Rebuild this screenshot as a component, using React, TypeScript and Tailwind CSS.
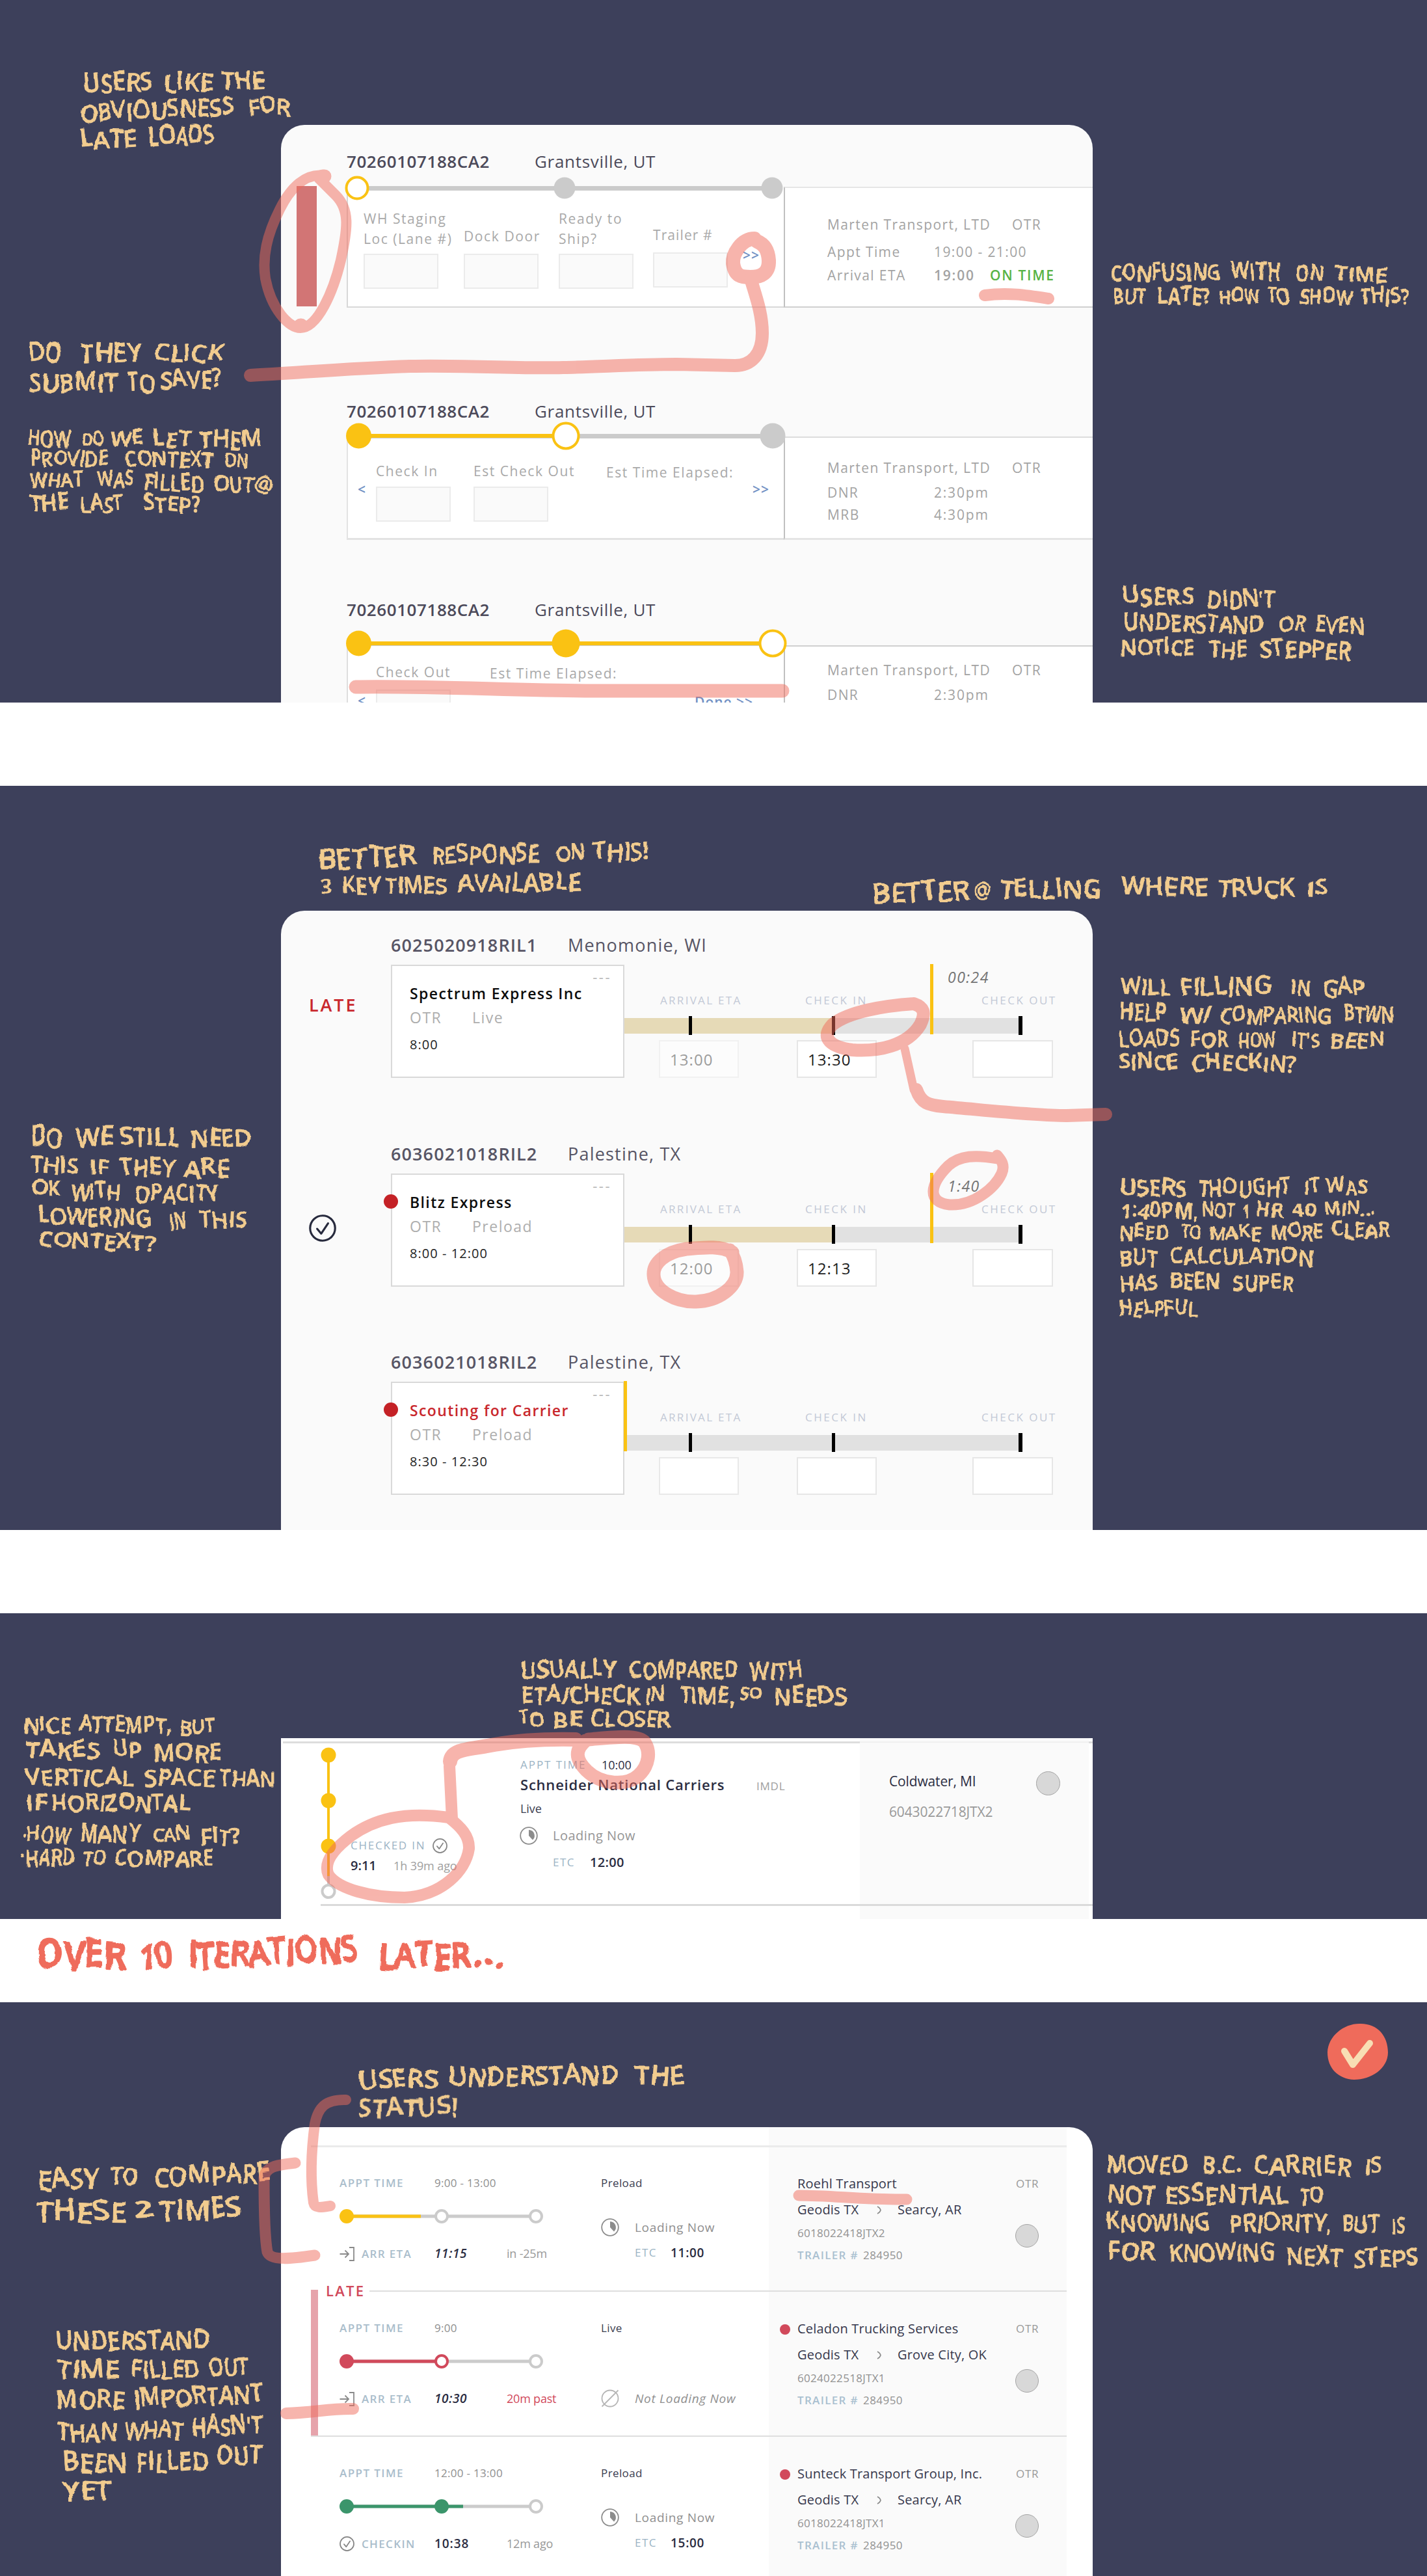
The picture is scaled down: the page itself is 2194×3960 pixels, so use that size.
import type { ReactNode } from "react";

/* ---------- shared pieces ---------- */

type Tone = "done" | "open" | "todo";

const YELLOW = "#fac213";

function WideStepper({ dots, fillTo }: { dots: { x: number; r: number; tone: Tone }[]; fillTo: number }) {
  return (
    <svg className="absolute -top-[24px] -left-[6px] overflow-visible" width="690" height="48" viewBox="-4 -24 690 48">
      <rect x="0" y="-3" width="660" height="7" fill="#cbcbcb" />
      {fillTo > 0 && <rect x="0" y="-3" width={fillTo} height="6" fill={YELLOW} />}
      {dots.map((d, i) =>
        d.tone === "open" ? (
          <circle key={i} cx={d.x} cy="0" r={d.r - 2} fill="#fff" stroke={YELLOW} strokeWidth="4" />
        ) : (
          <circle key={i} cx={d.x} cy="0" r={d.r} fill={d.tone === "done" ? YELLOW : "#cbcbcb"} />
        )
      )}
    </svg>
  );
}

function LoadHeader({ className }: { className: string }) {
  return (
    <div className={`flex pl-[101px] text-[26px] leading-[36px] text-[#4c4a5a] ${className}`}>
      <div className="w-[289px] font-semibold tracking-[0.57px]">70260107188CA2</div>
      <div className="tracking-[0.7px]">Grantsville, UT</div>
    </div>
  );
}

const FIELD = "h-[54px] w-[115px] shrink-0 border-2 border-[#ebebeb] bg-[#fafafa]";

function Arrow({ className, children }: { className: string; children: ReactNode }) {
  return (
    <div className={`absolute text-[21px] leading-[31px] font-semibold tracking-[1px] text-[#7191c4] ${className}`}>
      {children}
    </div>
  );
}

function CheckCircle({ size, stroke, width }: { size: number; stroke: string; width: number }) {
  return (
    <svg width={size} height={size} viewBox="0 0 40 40" fill="none" stroke={stroke} strokeWidth={width}>
      <circle cx="20" cy="20" r="18.3" />
      <path d="M12 21l6 7 10-15" strokeLinecap="round" strokeLinejoin="round" />
    </svg>
  );
}

function Pie() {
  return (
    <svg className="shrink-0" width="28" height="28" viewBox="0 0 28 28">
      <circle cx="14" cy="14" r="12.8" fill="none" stroke="#8c8c8c" strokeWidth="1.8" />
      <path d="M14 5a9 9 0 0 1 6 15.600L14 14z" fill="#8c8c8c" />
    </svg>
  );
}

/* ---------- first iteration ---------- */

function Step1() {
  return (
    <section className="h-[1080px] overflow-hidden bg-[#3d405b] pt-[192px] pl-[432px]">
      <div className="h-[888px] w-[1248px] overflow-hidden rounded-t-[36px] bg-[#fafafa] pt-[38px]">
        <LoadHeader className="" />
        <div className="mt-[20px] flex h-[187px]">
          <div className="w-[101px] pl-[24px]">
            <div className="h-[185px] w-[31px] bg-[#d27575]" />
          </div>
          <div className="relative mt-px flex w-[672px] border-b-2 border-l-2 border-[#d8d8d8] bg-white pt-[34px] pl-[24px] text-[21px] leading-[31px] tracking-[1.6px] text-[#a9a9a9]">
            <div className="w-[154px]">
              <div className="h-[62px] tracking-[1.55px]">
                WH Staging
                <br />
                Loc (Lane #)
              </div>
              <div className={`mt-[7px] ${FIELD}`} />
            </div>
            <div className="w-[146px]">
              <div className="flex h-[62px] items-end pb-[4px]">Dock Door</div>
              <div className={`mt-[7px] ${FIELD}`} />
            </div>
            <div className="w-[145px]">
              <div className="h-[62px]">
                Ready to
                <br />
                Ship?
              </div>
              <div className={`mt-[7px] ${FIELD}`} />
            </div>
            <div className="w-[120px]">
              <div className="flex h-[62px] items-end pb-[6px] tracking-[1.1px]">Trailer #</div>
              <div className={`mt-[5px] ${FIELD}`} />
            </div>
            <Arrow className="top-[90px] left-[607px]">&gt;&gt;</Arrow>
            <div className="absolute top-[2px] left-0">
              <WideStepper
                fillTo={0}
                dots={[
                  { x: 16, r: 18.5, tone: "open" },
                  { x: 335, r: 16.5, tone: "todo" },
                  { x: 654, r: 16.5, tone: "todo" },
                ]}
              />
            </div>
          </div>
          <div className="mt-px w-[475px] border-y-2 border-l-2 border-t-[#e6e6e6] border-b-[#d0d0d0] border-l-[#c0c0c0] bg-white pt-[38px] pl-[65px] text-[21px] leading-[36px] tracking-[1.4px] text-[#a3a3a3]">
            <div className="flex">
              <div className="w-[284px]">Marten Transport, LTD</div>
              <div>OTR</div>
            </div>
            <div className="mt-[6px] flex">
              <div className="w-[164px]">Appt Time</div>
              <div>19:00 - 21:00</div>
            </div>
            <div className="flex">
              <div className="w-[164px]">Arrival ETA</div>
              <div className="w-[86px] font-semibold tracking-[1.8px]">19:00</div>
              <div className="font-semibold tracking-[1.7px] text-[#57b345]">ON TIME</div>
            </div>
          </div>
        </div>

        <LoadHeader className="mt-[141px]" />
        <div className="mt-[21px] flex h-[159px] pl-[101px]">
          <div className="relative flex w-[672px] border-b-3 border-l-2 border-[#e3e3e3] bg-white pt-[38px] pl-[43px] text-[21px] leading-[31px] tracking-[1.55px] text-[#a9a9a9]">
            <Arrow className="top-[66px] left-[15px]">&lt;</Arrow>
            <div className="w-[150px]">
              <div className="whitespace-nowrap">Check In</div>
              <div className={`mt-[8px] ${FIELD}`} />
            </div>
            <div className="w-[204px]">
              <div className="whitespace-nowrap">Est Check Out</div>
              <div className={`mt-[8px] ${FIELD}`} />
            </div>
            <div className="pt-[2px] whitespace-nowrap">Est Time Elapsed:</div>
            <Arrow className="top-[66px] left-[622px]">&gt;&gt;</Arrow>
            <div className="absolute -top-px left-0">
              <WideStepper
                fillTo={320}
                dots={[
                  { x: 18.5, r: 19.5, tone: "done" },
                  { x: 337, r: 21.5, tone: "open" },
                  { x: 655, r: 19.5, tone: "todo" },
                ]}
              />
            </div>
          </div>
          <div className="w-[475px] border-t-2 border-b-3 border-l-2 border-t-[#dcdcdc] border-b-[#e5e5e5] border-l-[#c0c0c0] bg-white pt-[29px] pl-[65px] text-[21px] leading-[34px] tracking-[1.4px] text-[#a3a3a3]">
            <div className="flex">
              <div className="w-[284px]">Marten Transport, LTD</div>
              <div>OTR</div>
            </div>
            <div className="mt-[4px] flex">
              <div className="w-[164px]">DNR</div>
              <div className="tracking-[1.8px]">2:30pm</div>
            </div>
            <div className="flex">
              <div className="w-[164px]">MRB</div>
              <div className="tracking-[1.8px]">4:30pm</div>
            </div>
          </div>
        </div>

        <LoadHeader className="mt-[89px]" />
        <div className="mt-[37px] flex h-[159px] pl-[101px]">
          <div className="relative flex w-[672px] border-b-2 border-l-2 border-[#dedede] bg-white pt-[26px] pl-[43px] text-[21px] leading-[31px] tracking-[1.55px] text-[#a9a9a9]">
            <Arrow className="top-[70px] left-[15px]">&lt;</Arrow>
            <div className="w-[175px]">
              <div className="whitespace-nowrap">Check Out</div>
              <div className={`mt-[11px] ${FIELD}`} />
            </div>
            <div className="pt-[2px] whitespace-nowrap">Est Time Elapsed:</div>
            <Arrow className="top-[72px] left-[533px]">Done &gt;&gt;</Arrow>
            <div className="absolute -top-[3px] left-0">
              <WideStepper
                fillTo={660}
                dots={[
                  { x: 18.5, r: 19.5, tone: "done" },
                  { x: 337, r: 21.5, tone: "done" },
                  { x: 655, r: 21.5, tone: "open" },
                ]}
              />
            </div>
          </div>
          <div className="w-[475px] border-t-2 border-l-2 border-t-[#d0d0d0] border-l-[#c0c0c0] bg-white pt-[19px] pl-[65px] text-[21px] leading-[34px] tracking-[1.4px] text-[#a3a3a3]">
            <div className="flex">
              <div className="w-[284px]">Marten Transport, LTD</div>
              <div>OTR</div>
            </div>
            <div className="mt-[4px] flex">
              <div className="w-[164px]">DNR</div>
              <div className="tracking-[1.8px]">2:30pm</div>
            </div>
          </div>
        </div>
      </div>
    </section>
  );
}

/* ---------- second iteration ---------- */

type Load = {
  id: string;
  place: string;
  carrier: string;
  kind: string;
  slot: string;
  status?: "late" | "check";
  dot?: boolean;
  scouting?: boolean;
  elapsed?: string;
  arrival?: string;
  checkIn?: string;
};

const LOADS: Load[] = [
  { id: "6025020918RIL1", place: "Menomonie, WI", carrier: "Spectrum Express Inc", kind: "Live", slot: "8:00", status: "late", elapsed: "00:24", arrival: "13:00", checkIn: "13:30" },
  { id: "6036021018RIL2", place: "Palestine, TX", carrier: "Blitz Express", kind: "Preload", slot: "8:00 - 12:00", status: "check", dot: true, elapsed: "1:40", arrival: "12:00", checkIn: "12:13" },
  { id: "6036021018RIL2", place: "Palestine, TX", carrier: "Scouting for Carrier", kind: "Preload", slot: "8:30 - 12:30", dot: true, scouting: true },
];

function LoadBlock({ load }: { load: Load }) {
  return (
    <div className="h-[320.5px] shrink-0">
      <div className="flex pl-[169px] text-[27px] leading-[36px] text-[#575565]">
        <div className="w-[272px] font-semibold tracking-[1.1px]">{load.id}</div>
        <div className="tracking-[1.2px]">{load.place}</div>
      </div>
      <div className="mt-[12px] flex h-[174px]">
        <div className="w-[169px] shrink-0">
          {load.status === "late" && (
            <div className="pt-[44px] pl-[43px] text-[27px] leading-[36px] font-semibold tracking-[2.9px] text-[#c9282d]">LATE</div>
          )}
          {load.status === "check" && (
            <div className="pt-[63px] pl-[43px]">
              <CheckCircle size={42} stroke="#272a3d" width={3} />
            </div>
          )}
        </div>
        <div className="relative w-[359px] shrink-0 border-2 border-[#d9d9d9] bg-white pt-[6px] pl-[27px]">
          {load.dot && <div className="absolute top-[30px] -left-[13px] size-[22px] rounded-full bg-[#c42126]" />}
          <div className="h-[20px] pr-[18px] text-right text-[22px] leading-[20px] tracking-[2.5px] text-[#b5b5b5]">---</div>
          <div
            className={
              load.scouting
                ? "text-[23px] leading-[32px] font-semibold tracking-[1.38px] text-[#c9282d]"
                : "text-[23px] leading-[32px] font-semibold tracking-[1.4px] text-[#0c0c0c]"
            }
          >
            {load.carrier}
          </div>
          <div className="mt-[5px] flex text-[23px] leading-[32px] tracking-[1.5px] text-[#aeaeae]">
            <div className="w-[96px]">OTR</div>
            <div>{load.kind}</div>
          </div>
          <div className="mt-[10px] text-[20px] leading-[32px] tracking-[1.05px] text-[#222]">{load.slot}</div>
        </div>
        <div className="relative w-[720px]">
          <div className="h-[45px] pt-[3px] pl-[497px] text-[23px] leading-[32px] tracking-[1.5px] text-[#747474] italic">
            {load.elapsed}
          </div>
          <div className="flex pl-[55px] text-[17px] leading-[20px] tracking-[2.3px] text-[#c3c9d6]">
            <div className="w-[223px]">ARRIVAL ETA</div>
            <div className="w-[271px] tracking-[2.5px]">CHECK IN</div>
            <div className="tracking-[2.5px]">CHECK OUT</div>
          </div>
          <div className="relative mt-[17px] flex h-[24px] w-[612px] bg-[#e1e1e1]">
            {load.elapsed && <div className="h-full w-[321px] bg-[#e6dab7]" />}
            <div className="absolute -top-[3px] left-[99px] h-[29px] w-[5px] bg-black" />
            <div className="absolute -top-[3px] left-[319px] h-[29px] w-[5px] bg-black" />
            <div className="absolute -top-[3px] left-[606px] h-[29px] w-[6px] bg-black" />
          </div>
          <div className="mt-[10px] flex pl-[53px] text-[24px] leading-[56px] tracking-[1.08px]">
            <div
              className={
                load.arrival
                  ? "mr-[89px] h-[58px] w-[123px] border-2 border-[#f1f1f1] bg-[#fcfcfc] pl-[15px] text-[#9c9c9c]"
                  : "mr-[89px] h-[58px] w-[123px] border-2 border-[#e9e9e9] bg-white"
              }
            >
              {load.arrival}
            </div>
            <div className="mr-[147px] h-[58px] w-[123px] border-2 border-[#e6e6e6] bg-white pl-[15px] text-[#1d1d1d]">{load.checkIn}</div>
            <div className="h-[58px] w-[124px] border-2 border-[#e6e6e6] bg-white" />
          </div>
          <div
            className={
              load.elapsed
                ? "absolute -top-px left-[470px] h-[108px] w-[5px] bg-[#fac213]"
                : "absolute -top-px -left-px h-[108px] w-[5px] bg-[#fac213]"
            }
          />
        </div>
      </div>
    </div>
  );
}

function Step2() {
  return (
    <section className="mt-[128px] h-[1144px] overflow-hidden bg-[#3d405b] pt-[192px] pl-[432px]">
      <div className="flex h-[952px] w-[1248px] flex-col overflow-hidden rounded-t-[36px] bg-[#fafafa] pt-[35px]">
        {LOADS.map((l, i) => (
          <LoadBlock key={i} load={l} />
        ))}
      </div>
    </section>
  );
}

/* ---------- third iteration ---------- */

function Step3() {
  return (
    <section className="mt-[128px] h-[470px] overflow-hidden bg-[#3d405b] pt-[192px] pl-[432px]">
      <div className="flex h-[278px] w-[1248px] bg-white">
        <div className="w-[890px] pt-[5px]">
          <div className="ml-[3px] h-[3px] bg-[#dddddd]" />
          <div className="flex h-[247px] pl-[61px]">
            <svg className="mt-[6px] shrink-0" width="24" height="234" viewBox="0 0 24 234">
              <rect x="10" y="12" width="4" height="186" fill={YELLOW} />
              <rect x="10" y="198" width="4" height="14" fill="#cbcbcb" />
              <circle cx="12" cy="12" r="11.5" fill={YELLOW} />
              <circle cx="12" cy="82" r="11.5" fill={YELLOW} />
              <circle cx="12" cy="152" r="11.5" fill={YELLOW} />
              <circle cx="12" cy="221.500" r="9.5" fill="#fff" stroke="#cbcbcb" strokeWidth="4" />
            </svg>
            <div className="w-[283px] pt-[145px] pl-[22px]">
              <div className="flex items-center text-[17px] leading-[24px] tracking-[1.77px] text-[#9cb4c5]">
                <div className="w-[126px]">CHECKED IN</div>
                <CheckCircle size={23} stroke="#858585" width={3} />
              </div>
              <div className="mt-[7px] flex items-baseline text-[20px] leading-[24px] text-[#2b2d42]">
                <div className="w-[66px] font-semibold">9:11</div>
                <div className="text-[18px] tracking-[-0.1px] text-[#a0a0a0]">1h 39m ago</div>
              </div>
            </div>
            <div className="pt-[21px]">
              <div className="flex text-[18px] leading-[24px] text-[#2b2d42]">
                <div className="w-[125px] text-[17px] tracking-[1.95px] text-[#9cb4c5]">APPT TIME</div>
                <div>10:00</div>
              </div>
              <div className="mt-[3px] flex items-baseline text-[22px] leading-[30px] font-semibold tracking-[0.79px] text-[#2b2d42]">
                <div className="w-[363px]">Schneider National Carriers</div>
                <div className="text-[17px] font-normal text-[#a0a0a0]">IMDL</div>
              </div>
              <div className="mt-[7px] text-[18px] leading-[24px] tracking-[-0.1px] text-[#3c3e50]">Live</div>
              <div className="mt-[16px] -ml-px flex h-[28px] text-[20px] leading-[28px] tracking-[0.47px] text-[#959595]">
                <Pie />
                <div className="pl-[23px]">Loading Now</div>
              </div>
              <div className="mt-[13px] flex pl-[50px] text-[20px] leading-[28px] text-[#2b2d42]">
                <div className="w-[57px] text-[17px] tracking-[1.5px] text-[#9cb4c5]">ETC</div>
                <div className="font-semibold tracking-[0.3px]">12:00</div>
              </div>
            </div>
          </div>
          <div className="ml-[61px] h-[3px] bg-[#dadada]" />
        </div>
        <div className="w-[352px] bg-[#fafafa] pt-[5px]">
          <div className="h-[2px] bg-[#f0f0f0]" />
          <div className="flex h-[248px] pt-[45px] pl-[45px] text-[21px] leading-[28px] tracking-[-0.15px]">
            <div className="w-[226px]">
              <div className="text-[#2b2d42]">Coldwater, MI</div>
              <div className="mt-[19px] text-[#999]">6043022718JTX2</div>
            </div>
            <div className="-mt-px size-[37px] rounded-full border-[1.5px] border-[#a5a5a5] bg-[#d8d8d8]" />
          </div>
          <div className="h-[3px] bg-[#dadada]" />
        </div>
        <div className="flex-1 pt-[5px]">
          <div className="h-[3px] bg-[#dddddd]" />
          <div className="mt-[247px] h-[3px] bg-[#dadada]" />
        </div>
      </div>
    </section>
  );
}

/* ---------- final design ---------- */

type FinalRow = {
  slot: string;
  kind: string;
  color: string;
  fill: number;
  second: "todo" | "open" | "done";
  label: string;
  time: string;
  italic: boolean;
  rel: string;
  late?: boolean;
  etc?: string;
  carrier: string;
  dest: string;
  id: string;
  flagged?: boolean;
};

const ROWS: FinalRow[] = [
  { slot: "9:00 - 13:00", kind: "Preload", color: YELLOW, fill: 114, second: "todo", label: "ARR ETA", time: "11:15", italic: true, rel: "in -25m", etc: "11:00", carrier: "Roehl Transport", dest: "Searcy, AR", id: "6018022418JTX2" },
  { slot: "9:00", kind: "Live", color: "#d1495b", fill: 146, second: "open", label: "ARR ETA", time: "10:30", italic: true, rel: "20m past", late: true, carrier: "Celadon Trucking Services", dest: "Grove City, OK", id: "6024022518JTX1", flagged: true },
  { slot: "12:00 - 13:00", kind: "Preload", color: "#3b956b", fill: 179, second: "done", label: "CHECKIN", time: "10:38", italic: false, rel: "12m ago", etc: "15:00", carrier: "Sunteck Transport Group, Inc.", dest: "Searcy, AR", id: "6018022418JTX1", flagged: true },
];

function ArriveIcon() {
  return (
    <svg width="23" height="22" viewBox="0 0 23 22" fill="none" stroke="#8a8a8a" strokeWidth="1.8">
      <path d="M0.500 11H14M8.500 5.500L14 11l-5.500 5.500M15 1h7v20h-7" />
    </svg>
  );
}

function SmallStepper({ row }: { row: FinalRow }) {
  return (
    <svg width="314" height="24" viewBox="0 0 314 24">
      <rect x="11" y="9.500" width="290" height="5" fill="#cbcbcb" />
      <rect x="11" y="9.500" width={row.fill} height="5" fill={row.color} />
      <circle cx="11" cy="12" r="11" fill={row.color} />
      {row.second === "done" ? (
        <circle cx="157" cy="12" r="11" fill={row.color} />
      ) : (
        <circle cx="157" cy="12" r="9" fill="#fff" stroke={row.second === "open" ? row.color : "#cbcbcb"} strokeWidth="4" />
      )}
      <circle cx="302" cy="12" r="9" fill="#fff" stroke="#cbcbcb" strokeWidth="4" />
    </svg>
  );
}

function FinalRowView({ row, first }: { row: FinalRow; first: boolean }) {
  const line = first ? "border-t-3 border-[#ebebeb]" : "border-t-2 border-[#dedede]";
  const top = first ? "pt-[43px]" : "pt-[44px]";
  return (
    <div className="relative flex h-[223px] w-[1162px] shrink-0">
      {row.late && (
        <>
          <div className="absolute -top-px left-0 h-[224px] w-[11px] bg-[#e6a3ab]" />
          <div className="absolute -top-[14px] left-[11px] w-[79px] bg-white pl-[12px] text-[22px] leading-[28px] font-semibold tracking-[2.3px] text-[#d1495b]">
            LATE
          </div>
        </>
      )}
      <div className={`flex w-[704px] pl-[44px] ${line} ${top}`}>
        <div className="w-[402px]">
          <div className="flex text-[17px] leading-[24px]">
            <div className="w-[146px] font-semibold tracking-[1.42px] text-[#a9bdcb]">APPT TIME</div>
            <div className="tracking-[0.3px] text-[#8f8f8f]">{row.slot}</div>
          </div>
          <div className="mt-[27px] h-[24px]">
            <SmallStepper row={row} />
          </div>
          <div className="mt-[33px] flex items-baseline text-[19px] leading-[24px] text-[#2b2d42]">
            <div className="flex w-[34px] self-center">
              {row.label === "CHECKIN" ? <CheckCircle size={23} stroke="#858585" width={3} /> : <ArriveIcon />}
            </div>
            <div className="w-[112px] text-[17px] font-semibold tracking-[1.35px] text-[#a9bdcb]">{row.label}</div>
            <div className={row.italic ? "w-[111px] font-semibold tracking-[0.65px] italic" : "w-[111px] font-semibold tracking-[0.9px]"}>
              {row.time}
            </div>
            <div className={row.late ? "text-[18px] tracking-[-0.2px] text-[#d1495b]" : "text-[18px] tracking-[-0.2px] text-[#999]"}>{row.rel}</div>
          </div>
        </div>
        <div>
          <div className="text-[17px] leading-[24px] tracking-[0.4px] text-[#3c3e50]">{row.kind}</div>
          {row.late ? (
            <div className="mt-[82px] flex text-[19px] leading-[28px] tracking-[0.68px] text-[#8f8f8f] italic">
              <svg width="28" height="28" viewBox="0 0 28 28" fill="none" stroke="#b5b5b5" strokeWidth="1.8">
                <circle cx="14" cy="14" r="12.500" />
                <path d="M1.500 26.500L26.500 1.500" />
              </svg>
              <div className="pl-[24px]">Not Loading Now</div>
            </div>
          ) : (
            <>
              <div className="mt-[42px] flex text-[19px] leading-[28px] tracking-[0.68px] text-[#8f8f8f]">
                <Pie />
                <div className="pl-[24px]">Loading Now</div>
              </div>
              <div className="mt-[11px] flex pl-[52px] text-[19px] leading-[28px] text-[#2b2d42]">
                <div className="w-[55px] text-[17px] tracking-[1.5px] text-[#9cb4c5]">ETC</div>
                <div className="font-semibold tracking-[0.7px]">{row.etc}</div>
              </div>
            </>
          )}
        </div>
      </div>
      <div className={`flex w-[458px] bg-[#fafafa] ${line} ${first ? "pt-[42px]" : "pt-[43px]"}`}>
        <div className="flex w-[44px] pt-[7px] pl-[17px]">
          {row.flagged && <div className="size-[16px] rounded-full bg-[#d1495b]" />}
        </div>
        <div className="w-[335px] text-[20px] leading-[28px] tracking-[0.2px] text-[#36384c]">
          <div>{row.carrier}</div>
          <div className="mt-[12px] flex">
            <div className="w-[122px]">Geodis TX</div>
            <svg className="mt-[8px] w-[32px]" width="32" height="13" viewBox="0 0 32 13" fill="none" stroke="#8a8a8a" strokeWidth="1.6">
              <path d="M1 1q4 2 5 5.500q-1 3.500-5 5.500" />
            </svg>
            <div>{row.dest}</div>
          </div>
          <div className="mt-[10px] text-[17px] leading-[24px] tracking-[0.3px] text-[#929292]">{row.id}</div>
          <div className="mt-[10px] flex text-[17px] leading-[24px] text-[#929292]">
            <div className="w-[101px] font-semibold tracking-[1.33px] text-[#a9c0d0]">TRAILER #</div>
            <div className="tracking-[0.45px]">284950</div>
          </div>
        </div>
        <div>
          <div className="h-[76px] pl-px text-[17px] leading-[28px] tracking-[0.7px] text-[#999]">OTR</div>
          <div className="size-[36px] rounded-full border-[1.5px] border-[#a5a5a5] bg-[#d8d8d8]" />
        </div>
      </div>
    </div>
  );
}

function Step4() {
  return (
    <section className="mt-[128px] h-[882px] overflow-hidden bg-[#3d405b] pt-[192px] pl-[432px]">
      <div className="flex h-[690px] w-[1248px] flex-col overflow-hidden rounded-t-[36px] bg-white pl-[46px]">
        <div className="ml-[704px] h-[28px] w-[458px] shrink-0 bg-[#fafafa]" />
        {ROWS.map((r, i) => (
          <FinalRowView key={i} row={r} first={i === 0} />
        ))}
      </div>
    </section>
  );
}

/* ---------- handwritten notes ---------- */

/* word, left x, baseline y, right x, cap height, tilt in degrees */
type Word = [string, number, number, number, number, number?];

const NOTES: Word[] = [
  ["USERS", 129, 143, 236, 28, -3], ["LIKE", 251, 139, 328, 26, -1], ["THE", 340, 138, 408, 27, -2],
  ["OBVIOUSNESS", 123, 187, 361, 27, -2.5], ["FOR", 382, 177, 446, 26, -2],
  ["LATE", 124, 228, 211, 27, -2], ["LOADS", 228, 222, 330, 28, -1],
  ["DO", 45, 557, 96, 31], ["THEY", 123, 557, 219, 29, -1], ["CLICK", 237, 555, 343, 26],
  ["SUBMIT", 43, 602, 182, 28], ["TO", 196, 601, 238, 28], ["SAVE?", 246, 597, 342, 27, -1],
  ["HOW", 41, 686, 109, 24], ["DO", 125, 684, 161, 21], ["WE", 170, 685, 221, 23], ["LET", 235, 686, 294, 24], ["THEM", 307, 688, 403, 26],
  ["PROVIDE", 47, 716, 167, 23], ["CONTEXT", 190, 715, 328, 23, 1.5], ["ON", 344, 718, 382, 21],
  ["WHAT", 45, 749, 129, 23], ["WAS", 149, 747, 206, 22], ["FILLED", 220, 752, 314, 24, 2], ["OUT@", 328, 757, 419, 24],
  ["THE", 45, 785, 107, 25], ["LAST", 123, 786, 190, 24], ["STEP?", 220, 786, 309, 24, 2],

  ["CONFUSING", 1706, 431, 1877, 25], ["WITH", 1893, 430, 1970, 26], ["ON", 1992, 431, 2036, 23], ["TIME", 2052, 433, 2134, 23],
  ["BUT", 1711, 467, 1762, 24], ["LATE?", 1779, 466, 1862, 24], ["HOW", 1874, 466, 1937, 22], ["TO", 1948, 467, 1984, 24],
  ["SHOW", 1997, 467, 2080, 23], ["THIS?", 2091, 467, 2167, 24],
  ["USERS", 1725, 930, 1837, 26], ["DIDN'T", 1856, 933, 1960, 27, 1.5],
  ["UNDERSTAND", 1727, 969, 1943, 26, 1.3], ["OR", 1967, 970, 2008, 24], ["EVEN", 2022, 973, 2098, 25],
  ["NOTICE", 1723, 1007, 1837, 25], ["THE", 1859, 1011, 1918, 25], ["STEPPER", 1936, 1009, 2078, 26, 2],

  ["BETTER", 489, 1338, 642, 31, -3], ["RESPONSE", 663, 1328, 830, 27, -1], ["ON", 855, 1323, 899, 23], ["THIS!", 913, 1323, 998, 27, -1],
  ["3", 493, 1372, 512, 22], ["KEY", 525, 1374, 586, 25], ["TIMES", 593, 1373, 686, 25], ["AVAILABLE", 704, 1372, 894, 27, -1],
  ["BETTER", 1341, 1388, 1492, 30, -2], ["@", 1499, 1381, 1524, 25], ["TELLING", 1537, 1380, 1692, 28],
  ["WHERE", 1723, 1376, 1858, 27], ["TRUCK", 1872, 1378, 1990, 27], ["IS", 2010, 1377, 2041, 23],

  ["DO", 48, 1764, 96, 32], ["WE", 117, 1761, 176, 28], ["STILL", 185, 1761, 276, 27], ["NEED", 293, 1762, 386, 26],
  ["THIS", 47, 1803, 121, 25], ["IF", 138, 1804, 167, 22], ["THEY", 185, 1807, 269, 26], ["ARE", 282, 1808, 354, 26],
  ["OK", 49, 1837, 94, 22], ["WITH", 109, 1844, 186, 25], ["OPACITY", 206, 1847, 336, 25],
  ["LOWERING", 58, 1881, 233, 26, 1.5], ["IN", 260, 1889, 287, 24], ["THIS", 307, 1887, 380, 24],
  ["CONTEXT?", 59, 1916, 238, 23, 2],

  ["WILL", 1723, 1529, 1800, 25], ["FILLING", 1814, 1531, 1955, 28, -1], ["IN", 1985, 1528, 2016, 22], ["GAP", 2033, 1530, 2099, 25],
  ["HELP", 1721, 1569, 1793, 26], ["W/", 1813, 1571, 1865, 25], ["COMPARING", 1876, 1572, 2047, 24], ["BTWN", 2066, 1571, 2144, 24],
  ["LOADS", 1720, 1608, 1814, 25], ["FOR", 1831, 1610, 1889, 24], ["HOW", 1904, 1610, 1962, 22], ["IT'S", 1985, 1610, 2030, 23], ["BEEN", 2045, 1611, 2131, 23],
  ["SINCE", 1720, 1643, 1812, 23], ["CHECKIN?", 1831, 1644, 1993, 24, 1],

  ["USERS", 1721, 1838, 1826, 25], ["THOUGHT", 1842, 1839, 1985, 25, -1], ["IT", 2004, 1835, 2030, 22], ["WAS", 2040, 1835, 2103, 21],
  ["1:40PM,", 1723, 1872, 1843, 23], ["NOT", 1849, 1871, 1898, 21], ["1", 1912, 1872, 1922, 22], ["HR", 1930, 1871, 1973, 22], ["40", 1985, 1869, 2025, 19], ["MIN...", 2036, 1868, 2115, 20],
  ["NEED", 1720, 1904, 1798, 21], ["TO", 1816, 1904, 1848, 20], ["MAKE", 1858, 1905, 1939, 20], ["MORE", 1954, 1904, 2034, 22], ["CLEAR", 2047, 1902, 2137, 22],
  ["BUT", 1722, 1945, 1779, 24], ["CALCULATION", 1799, 1943, 2020, 24],
  ["HAS", 1722, 1984, 1780, 24], ["BEEN", 1798, 1981, 1877, 24], ["SUPER", 1895, 1983, 1990, 23],
  ["HELPFUL", 1720, 2022, 1842, 23],

  ["NICE", 35, 2663, 110, 23], ["ATTEMPT,", 121, 2662, 264, 25, 1], ["BUT", 276, 2665, 331, 21],
  ["TAKES", 39, 2702, 154, 25], ["UP", 174, 2701, 217, 24], ["MORE", 236, 2705, 341, 25, 1],
  ["VERTICAL", 39, 2745, 206, 25], ["SPACE", 222, 2745, 331, 25], ["THAN", 338, 2746, 424, 25],
  ["IF", 40, 2782, 72, 24], ["HORIZONTAL", 79, 2783, 292, 24],
  ["·HOW", 34, 2832, 109, 24], ["MANY", 122, 2832, 215, 26], ["CAN", 234, 2831, 293, 22], ["FIT?", 307, 2835, 370, 24],
  ["·HARD", 31, 2867, 116, 24], ["TO", 128, 2868, 163, 22], ["COMPARE", 176, 2869, 329, 24],

  ["USUALLY", 800, 2580, 948, 26, -1], ["COMPARED", 967, 2580, 1135, 26], ["WITH", 1152, 2582, 1235, 27],
  ["ETA/CHECK", 802, 2618, 984, 25], ["IN", 992, 2618, 1024, 24], ["TIME,", 1044, 2619, 1130, 26], ["SO", 1137, 2611, 1173, 18], ["NEEDS", 1189, 2620, 1302, 26],
  ["TO", 798, 2653, 836, 22], ["BE", 850, 2654, 897, 22], ["CLOSER", 909, 2654, 1032, 24],

  ["USERS", 551, 3210, 674, 28, -1], ["UNDERSTAND", 689, 3207, 951, 28, -1], ["THE", 975, 3204, 1053, 29],
  ["STATUS!", 551, 3255, 704, 28, -1],
  ["EASY", 58, 3366, 152, 31, -2], ["TO", 169, 3359, 214, 27], ["COMPARE", 237, 3361, 417, 29, -2.5],
  ["THESE", 55, 3415, 195, 31], ["2", 207, 3411, 238, 25], ["TIMES", 246, 3414, 372, 31, -3],
  ["UNDERSTAND", 86, 3613, 323, 28, -0.5], ["TIME", 88, 3656, 184, 28], ["FILLED", 201, 3655, 307, 26], ["OUT", 321, 3651, 382, 26, -1],
  ["MORE", 86, 3702, 192, 27], ["IMPORTANT", 206, 3702, 406, 28, -2.5],
  ["THAN", 88, 3753, 180, 27], ["WHAT", 191, 3749, 282, 27], ["HASN'T", 295, 3744, 403, 28, -1],
  ["BEEN", 97, 3800, 196, 29], ["FILLED", 209, 3799, 321, 29, -1], ["OUT", 333, 3789, 403, 28, -1],
  ["YET", 96, 3843, 173, 29],

  ["MOVED", 1701, 3341, 1826, 27], ["B.C.", 1848, 3340, 1909, 26], ["CARRIER", 1928, 3342, 2078, 27], ["IS", 2097, 3342, 2126, 24],
  ["NOT", 1703, 3388, 1776, 28], ["ESSENTIAL", 1790, 3387, 1980, 27], ["TO", 1998, 3388, 2035, 24],
  ["KNOWING", 1701, 3429, 1860, 26], ["PRIORITY,", 1890, 3430, 2048, 26], ["BUT", 2063, 3432, 2120, 26], ["IS", 2140, 3432, 2160, 23],
  ["FOR", 1703, 3474, 1776, 28], ["KNOWING", 1797, 3476, 1960, 27], ["NEXT", 1978, 3482, 2063, 27], ["STEPS", 2080, 3484, 2181, 26],
];

const HEADLINE: Word[] = [
  ["OVER", 57, 3025, 192, 42], ["10", 213, 3026, 265, 38], ["ITERATIONS", 290, 3026, 551, 39, -2.5], ["LATER", 581, 3025, 724, 38], ["...", 728, 3022, 774, 38],
];

/* Uneven pen: every letter leans and bobs a little, in a fixed pattern. */
const LEAN = [-3, 2, -1, 4, -4, 1, 3, -2, 0, 4, -3];
const BOB = [0, 1.5, -2, 1, 1, -2.5, 2, -1, 1.5, -1.5, 0.5];

function Hand({ words, color, weight, scale }: { words: Word[]; color: string; weight: number; scale: number }) {
  return (
    <g
      fill={color}
      stroke={color}
      strokeWidth={weight}
      strokeLinejoin="round"
      filter={scale > 5 ? "url(#wobble-lg)" : "url(#wobble)"}
      className="font-['Open_Sans',sans-serif] font-semibold"
    >
      {words.map(([t, x, y, r, cap, tilt = 0], i) => (
        <text
          key={i}
          x={x}
          y={y}
          fontSize={cap / 0.714}
          textLength={r - x}
          lengthAdjust="spacingAndGlyphs"
          rotate={[...t].map((_, k) => LEAN[(i * 3 + k) % LEAN.length]).join(" ")}
          dy={[...t].map((_, k) => BOB[(i + k) % BOB.length] - (k ? BOB[(i + k - 1) % BOB.length] : 0)).join(" ")}
          transform={`rotate(${tilt} ${x} ${y})`}
        >
          {t}
        </text>
      ))}
    </g>
  );
}

function Annotations() {
  return (
    <svg className="pointer-events-none absolute inset-0" width="2194" height="3960" viewBox="0 0 2194 3960">
      <defs>
        <filter id="wobble" filterUnits="userSpaceOnUse" x="0" y="0" width="2194" height="3960">
          <feTurbulence type="fractalNoise" baseFrequency="0.05" numOctaves="2" seed="4" result="n" />
          <feDisplacementMap in="SourceGraphic" in2="n" scale="7" xChannelSelector="R" yChannelSelector="G" />
        </filter>
        <filter id="wobble-lg" filterUnits="userSpaceOnUse" x="0" y="2950" width="900" height="128">
          <feTurbulence type="fractalNoise" baseFrequency="0.04" numOctaves="2" seed="7" result="n" />
          <feDisplacementMap in="SourceGraphic" in2="n" scale="10" xChannelSelector="R" yChannelSelector="G" />
        </filter>
      </defs>
      <Hand words={NOTES} color="#f2cc8f" weight={0.9} scale={4} />
      <Hand words={HEADLINE} color="#ef6c5b" weight={3} scale={8} />

      <g fill="none" stroke="#ef6b5b" strokeLinecap="round" strokeLinejoin="round">
        <g opacity="0.5">
          <path strokeWidth="16" d="M498 270C470 266 447 288 430 322C410 362 403 395 408 428C417 475 444 504 462 504C488 504 512 450 524 400C535 350 538 322 516 300L490 274" />
          <path strokeWidth="21" d="M462 500h1M496 271h3" />
        </g>
        <g opacity="0.5">
          <path strokeWidth="22" d="M1160 367C1140 367 1126 390 1127 405C1130 425 1140 426 1154 426C1170 426 1183 420 1182 400C1181 385 1176 376 1164 371" />
          <path strokeWidth="20" d="M1154 428C1160 450 1172 480 1172 512C1172 545 1155 562 1130 562L1040 560C980 560 920 564 866 565C790 567 710 561 631 563C540 566 460 573 385 577" />
        </g>
        <path opacity="0.5" strokeWidth="18" d="M1514 454C1550 449 1580 454 1612 459" />
        <path opacity="0.5" strokeWidth="21" d="M547 1056C650 1054 780 1061 900 1062L1203 1062" />

        <g opacity="0.5">
          <path strokeWidth="20" d="M1405 1543C1360 1546 1305 1555 1280 1575C1264 1592 1270 1608 1310 1614C1350 1617 1395 1608 1415 1575C1424 1556 1420 1548 1405 1543" />
          <path strokeWidth="13" d="M1391 1612L1405 1675" />
          <path strokeWidth="20" d="M1409 1675C1416 1696 1428 1699 1450 1701C1520 1707 1590 1715 1640 1715L1700 1713" />
        </g>
        <path opacity="0.5" strokeWidth="17" d="M1533 1781C1500 1775 1476 1776 1458 1792C1430 1820 1424 1848 1460 1852C1497 1854 1530 1826 1540 1804C1546 1790 1538 1782 1533 1776" />
        <path opacity="0.5" strokeWidth="21" d="M1126 1925C1105 1914 1080 1918 1055 1920C1022 1925 1004 1942 1005 1960C1006 1985 1040 2002 1070 2001C1105 2000 1134 1978 1133 1955C1132 1942 1128 1930 1122 1922" />

        <g opacity="0.5">
          <path strokeWidth="18" d="M690 2794C620 2784 575 2797 540 2822C508 2846 498 2866 505 2882C520 2904 570 2917 622 2917C680 2914 716 2876 721 2842C722 2822 708 2808 690 2794" />
          <path strokeWidth="18" d="M695 2796L691 2715" />
          <path strokeWidth="22" d="M692 2708C694 2688 720 2690 760 2682C800 2675 840 2673 885 2674" />
          <path strokeWidth="21" d="M905 2674C940 2671 977 2666 990 2677C1001 2692 998 2714 982 2729C964 2746 925 2744 902 2722C884 2704 884 2690 900 2676" />
        </g>

        <path opacity="0.5" strokeWidth="16" d="M532 3228C500 3227 489 3240 484 3265C478 3310 477 3350 482 3386C484 3396 496 3393 508 3391" />
        <path opacity="0.5" strokeWidth="17" d="M454 3325C425 3328 406 3331 406 3350C406 3400 407 3440 411 3462C416 3476 450 3472 484 3467" />
        <path opacity="0.5" strokeWidth="18" d="M440 3710C480 3709 510 3702 543 3703" />
        <path opacity="0.5" strokeWidth="17" d="M1228 3375C1280 3375 1330 3382 1394 3381" />
      </g>

      <path fill="#ef6b5b" d="M2090 3111C2118 3110 2134 3130 2134 3155C2134 3180 2108 3197 2082 3197C2058 3196 2041 3180 2041 3155C2042 3130 2066 3111 2090 3111Z" />
      <path fill="none" stroke="#f8deb4" strokeWidth="10" strokeLinecap="round" strokeLinejoin="round" d="M2067 3153L2080 3174L2106 3141" />
    </svg>
  );
}

export default function App() {
  return (
    <main className="relative h-[3960px] w-[2194px] overflow-hidden bg-white font-['Open_Sans',sans-serif] whitespace-nowrap">
      <Step1 />
      <Step2 />
      <Step3 />
      <Step4 />
      <Annotations />
    </main>
  );
}
